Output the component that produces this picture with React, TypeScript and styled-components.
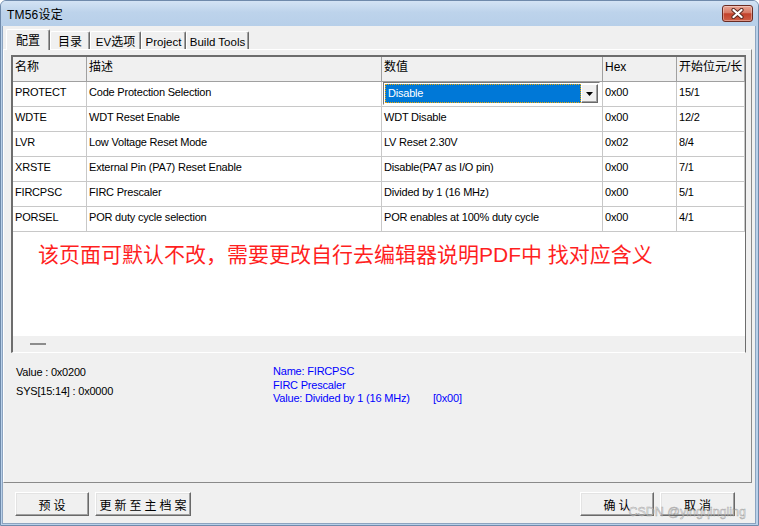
import React from "react";
import styled, { createGlobalStyle } from "styled-components";

const GlobalStyle = createGlobalStyle`
  html, body { margin: 0; padding: 0; background: #fff; }
  body {
    width: 759px; height: 526px; overflow: hidden;
    font-family: "Liberation Sans", "Noto Sans CJK SC", sans-serif;
    font-size: 11px;
    color: #000;
  }
  * { box-sizing: border-box; }
`;

const Window = styled.div`
  position: relative;
  width: 759px;
  height: 526px;
  display: flex;
  flex-direction: column;
  background: #b9d1ea;
  border: 1px solid #6f8aab;
  border-radius: 6px 6px 0 0;
  overflow: hidden;
`;

const TitleBar = styled.div`
  height: 25px;
  flex: none;
  display: flex;
  align-items: center;
  padding: 0 5px 0 6px;
  background: linear-gradient(#d3e3f4, #bdd3eb 45%, #b7cfe9);
`;

const Title = styled.div`
  font-size: 12px;
  letter-spacing: 0.2px;
`;

const CloseButton = styled.div`
  margin-left: auto;
  width: 31px;
  height: 17px;
  display: flex;
  align-items: center;
  justify-content: center;
  border: 1px solid #6a2b22;
  border-radius: 3px;
  background: linear-gradient(#e9a594, #d77a66 45%, #c2412b 52%, #cf5f47);
  box-shadow: inset 0 0 0 1px rgba(255, 255, 255, 0.35);
`;

const Frame = styled.div`
  flex: 1;
  display: flex;
  padding: 0 2px 1px 1px;
`;

const Client = styled.div`
  flex: 1;
  display: flex;
  flex-direction: column;
  background: #f0f0f0;
  border: 1px solid #8da4c0;
  border-top: none;
`;

const TabStrip = styled.div`
  height: 23px;
  flex: none;
  display: flex;
  align-items: flex-end;
  padding-left: 3px;
  position: relative;
  z-index: 1;
`;

const Tab = styled.div<{ $active?: boolean; $w: number }>`
  width: ${(p) => p.$w}px;
  height: ${(p) => (p.$active ? 21 : 18)}px;
  margin-bottom: ${(p) => (p.$active ? -1 : 0)}px;
  padding-top: ${(p) => (p.$active ? 4 : 3)}px;
  background: #f0f0f0;
  border-top: 1px solid #fff;
  border-left: 1px solid #fff;
  border-right: 1px solid #696969;
  box-shadow: inset -1px 0 0 #a0a0a0;
  border-radius: 2px 2px 0 0;
  text-align: center;
  line-height: 14px;
  font-size: 11.5px;
  white-space: nowrap;
`;

const Cjk = styled.span`
  font-size: 12px;
`;

const TabPanel = styled.div`
  flex: 1;
  display: flex;
  flex-direction: column;
  margin-right: 3px;
  border: 1px solid;
  border-color: #fff #8a8a8a #8a8a8a #fff;
  padding: 5px 5px 0 7px;
`;

const Grid = styled.div`
  height: 298px;
  flex: none;
  display: flex;
  flex-direction: column;
  background: #fff;
  border-style: solid;
  border-width: 2px 1px 1px 2px;
  border-color: #6d6d6d #6d6d6d #fff #6d6d6d;
  overflow: hidden;
`;

const Row = styled.div<{ $head?: boolean }>`
  display: grid;
  grid-template-columns: 74px 295px 221px 74px 1fr;
  height: 25px;
  flex: none;
  background: ${(p) => (p.$head ? "#f0f0f0" : "#fff")};
  font-size: ${(p) => (p.$head ? 12 : 11)}px;
`;

const Cell = styled.div<{ $head?: boolean; $bare?: boolean }>`
  border-right: 1px solid ${(p) => (p.$head ? "#a0a0a0" : "#c8c8c8")};
  border-bottom: 1px solid ${(p) => (p.$head ? "#a0a0a0" : "#c8c8c8")};
  padding: ${(p) => (p.$bare ? "0" : "3px 0 0 2px")};
  line-height: 14px;
  white-space: nowrap;
  overflow: hidden;
  letter-spacing: ${(p) => (p.$head ? 0 : -0.2)}px;
`;

const Combo = styled.div`
  margin: 0 2px 0 1px;
  height: 23px;
  display: flex;
  border: 1px solid;
  border-color: #7a7a7a #fff #fff #7a7a7a;
  padding: 1px;
  background: #fff;
`;

const ComboText = styled.div`
  flex: 1;
  background: #0078d7;
  color: #fff;
  border: 1px dotted #f0a800;
  padding: 1px 0 0 2px;
  line-height: 14px;
`;

const ComboButton = styled.div`
  width: 17px;
  display: flex;
  align-items: center;
  justify-content: center;
  background: #f0f0f0;
  border: 1px solid;
  border-color: #fff #696969 #696969 #fff;
  box-shadow: inset -1px -1px 0 #a0a0a0;
`;

const Filler = styled.div`
  flex: 1;
  padding: 11px 0 0 25px;
`;

const Note = styled.div`
  color: #ff1f1f;
  font-size: 21px;
  line-height: 24px;
  white-space: nowrap;
`;

const HScroll = styled.div`
  height: 16px;
  flex: none;
  background: #f0f0f0;
  padding: 7px 0 0 17px;
`;

const Dash = styled.div`
  width: 16px;
  height: 2px;
  background: #8c8c8c;
`;

const Info = styled.div`
  flex: 1;
  display: grid;
  grid-template-columns: 257px 1fr;
  align-content: start;
  padding: 13px 0 0 5px;
  letter-spacing: -0.2px;
  line-height: 13px;
`;

const InfoLeft = styled.div`
  display: flex;
  flex-direction: column;
  gap: 6px;
`;

const Detail = styled.div`
  color: #0000ff;
  margin-top: -1px;
  line-height: 13.5px;
`;

const DetailValue = styled.span`
  display: inline-block;
  width: 160px;
`;

const ButtonBar = styled.div`
  height: 40px;
  flex: none;
  display: flex;
  gap: 6px;
  padding: 9px 20px 0 12px;
`;

const Button = styled.div<{ $w: number; $push?: boolean }>`
  width: ${(p) => p.$w}px;
  height: 24px;
  margin-left: ${(p) => (p.$push ? "auto" : "0")};
  display: flex;
  align-items: center;
  justify-content: center;
  background: #f0f0f0;
  border: 1px solid;
  border-color: #fff #696969 #696969 #fff;
  box-shadow: inset -1px -1px 0 #a0a0a0, inset 1px 1px 0 #e3e3e3;
  font-size: 12px;
  letter-spacing: 3px;
  text-indent: 3px;
`;

const Watermark = styled.div`
  position: absolute;
  right: 12px;
  bottom: 6px;
  font-size: 12.5px;
  color: rgba(235, 235, 235, 0.55);
  -webkit-text-stroke: 0.5px rgba(90, 90, 90, 0.5);
  pointer-events: none;
`;

type Param = { name: string; desc: string; value: string; hex: string; bits: string; combo?: boolean };

const params: Param[] = [
  { name: "PROTECT", desc: "Code Protection Selection", value: "Disable", hex: "0x00", bits: "15/1", combo: true },
  { name: "WDTE", desc: "WDT Reset Enable", value: "WDT Disable", hex: "0x00", bits: "12/2" },
  { name: "LVR", desc: "Low Voltage Reset Mode", value: "LV Reset 2.30V", hex: "0x02", bits: "8/4" },
  { name: "XRSTE", desc: "External Pin (PA7) Reset Enable", value: "Disable(PA7 as I/O pin)", hex: "0x00", bits: "7/1" },
  { name: "FIRCPSC", desc: "FIRC Prescaler", value: "Divided by 1 (16 MHz)", hex: "0x00", bits: "5/1" },
  { name: "PORSEL", desc: "POR duty cycle selection", value: "POR enables at 100% duty cycle", hex: "0x00", bits: "4/1" },
];

const tabs = [
  { label: <Cjk>配置</Cjk>, w: 44, active: true },
  { label: <Cjk>目录</Cjk>, w: 40 },
  { label: <>EV<Cjk>选项</Cjk></>, w: 51 },
  { label: "Project", w: 45 },
  { label: "Build Tools", w: 63 },
];

export default function App() {
  return (
    <>
      <GlobalStyle />
      <Window>
        <TitleBar>
          <Title>TM56设定</Title>
          <CloseButton>
            <svg width="13" height="11" viewBox="0 0 13 11">
              <path d="M2.5 2 L10.5 9 M10.5 2 L2.5 9" stroke="#5a2a22" strokeWidth="4.2" strokeLinecap="round" />
              <path d="M2.5 2 L10.5 9 M10.5 2 L2.5 9" stroke="#fff" strokeWidth="2.3" strokeLinecap="round" />
            </svg>
          </CloseButton>
        </TitleBar>
        <Frame>
          <Client>
            <TabStrip>
              {tabs.map((t, i) => (
                <Tab key={i} $w={t.w} $active={t.active}>
                  {t.label}
                </Tab>
              ))}
            </TabStrip>
            <TabPanel>
              <Grid>
                <Row $head>
                  <Cell $head>名称</Cell>
                  <Cell $head>描述</Cell>
                  <Cell $head>数值</Cell>
                  <Cell $head>Hex</Cell>
                  <Cell $head>开始位元/长</Cell>
                </Row>
                {params.map((p) => (
                  <Row key={p.name}>
                    <Cell>{p.name}</Cell>
                    <Cell>{p.desc}</Cell>
                    {p.combo ? (
                      <Cell $bare>
                        <Combo>
                          <ComboText>{p.value}</ComboText>
                          <ComboButton>
                            <svg width="7" height="4" viewBox="0 0 7 4">
                              <path d="M0 0 H7 L3.5 4 Z" fill="#000" />
                            </svg>
                          </ComboButton>
                        </Combo>
                      </Cell>
                    ) : (
                      <Cell>{p.value}</Cell>
                    )}
                    <Cell>{p.hex}</Cell>
                    <Cell>{p.bits}</Cell>
                  </Row>
                ))}
                <Filler>
                  <Note>该页面可默认不改，需要更改自行去编辑器说明PDF中 找对应含义</Note>
                </Filler>
                <HScroll>
                  <Dash />
                </HScroll>
              </Grid>
              <Info>
                <InfoLeft>
                  <div>Value : 0x0200</div>
                  <div>SYS[15:14] : 0x0000</div>
                </InfoLeft>
                <Detail>
                  <div>Name: FIRCPSC</div>
                  <div>FIRC Prescaler</div>
                  <div>
                    <DetailValue>Value: Divided by 1 (16 MHz)</DetailValue>[0x00]
                  </div>
                </Detail>
              </Info>
            </TabPanel>
            <ButtonBar>
              <Button $w={74}>预设</Button>
              <Button $w={96}>更新至主档案</Button>
              <Button $w={74} $push>确认</Button>
              <Button $w={75}>取消</Button>
            </ButtonBar>
          </Client>
        </Frame>
        <Watermark>CSDN @yingqingling</Watermark>
      </Window>
    </>
  );
}
